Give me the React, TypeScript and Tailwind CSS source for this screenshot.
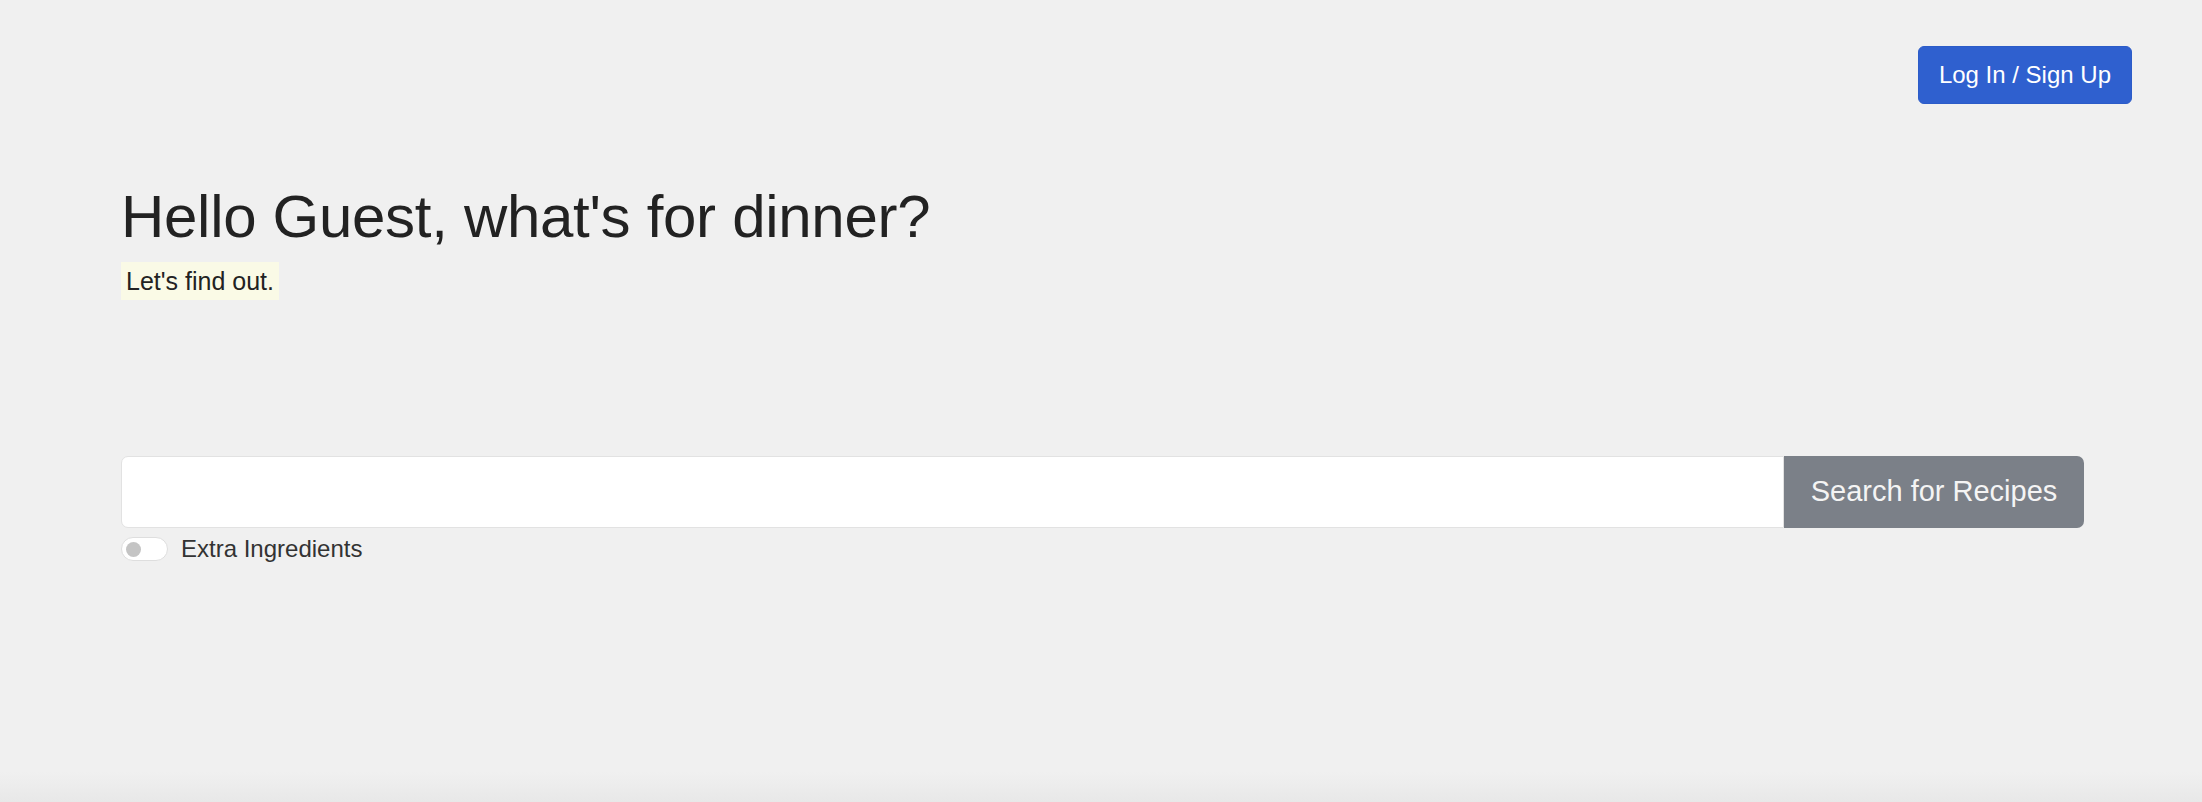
import React from "react";

export default function App() {
  return (
    <div
      className="relative w-[2202px] h-[802px] overflow-hidden bg-[#f0f0f0] text-[#222]"
      style={{ fontFamily: '"Liberation Sans", Arial, sans-serif' }}
    >
      <div className="flex justify-end pt-[46px] pr-[70px]">
        <button className="h-[58px] px-[20px] rounded-[6px] bg-[#2f60cf] border border-[#2c5cc8] text-white text-[24px] leading-[36px]">
          Log In / Sign Up
        </button>
      </div>

      <div className="pl-[121px] pr-[118px]">
        <h1 className="mt-[77px] text-[60px] leading-[72px] font-normal text-[#222] tracking-[-0.3px]">
          Hello Guest, what's for dinner?
        </h1>
        <div className="mt-[9px]">
          <span className="inline-block bg-[#fafae6] px-[5px] py-[4px] text-[25px] leading-[30px] text-[#222]">
            Let's find out.
          </span>
        </div>

        <div className="mt-[156px] flex h-[72px]">
          <div className="flex-1 bg-white border border-[#e2e2e2] rounded-l-[7px]"></div>
          <button className="w-[300px] bg-[#7b8088] text-[#f4f4f4] text-[29px] rounded-r-[7px]">
            Search for Recipes
          </button>
        </div>

        <div className="mt-[7px] flex items-center gap-[13px]">
          <div className="w-[47px] h-[24px] rounded-full border border-[#dedede] bg-white flex items-center px-[4px]">
            <div className="w-[15px] h-[15px] rounded-full bg-[#c4c4c4]"></div>
          </div>
          <span className="text-[24px] leading-[28px] text-[#333]">Extra Ingredients</span>
        </div>
      </div>

      <div className="absolute left-0 right-0 bottom-0 h-[30px] bg-gradient-to-b from-[#f0f0f0] to-[#e8e8e8]"></div>
    </div>
  );
}
